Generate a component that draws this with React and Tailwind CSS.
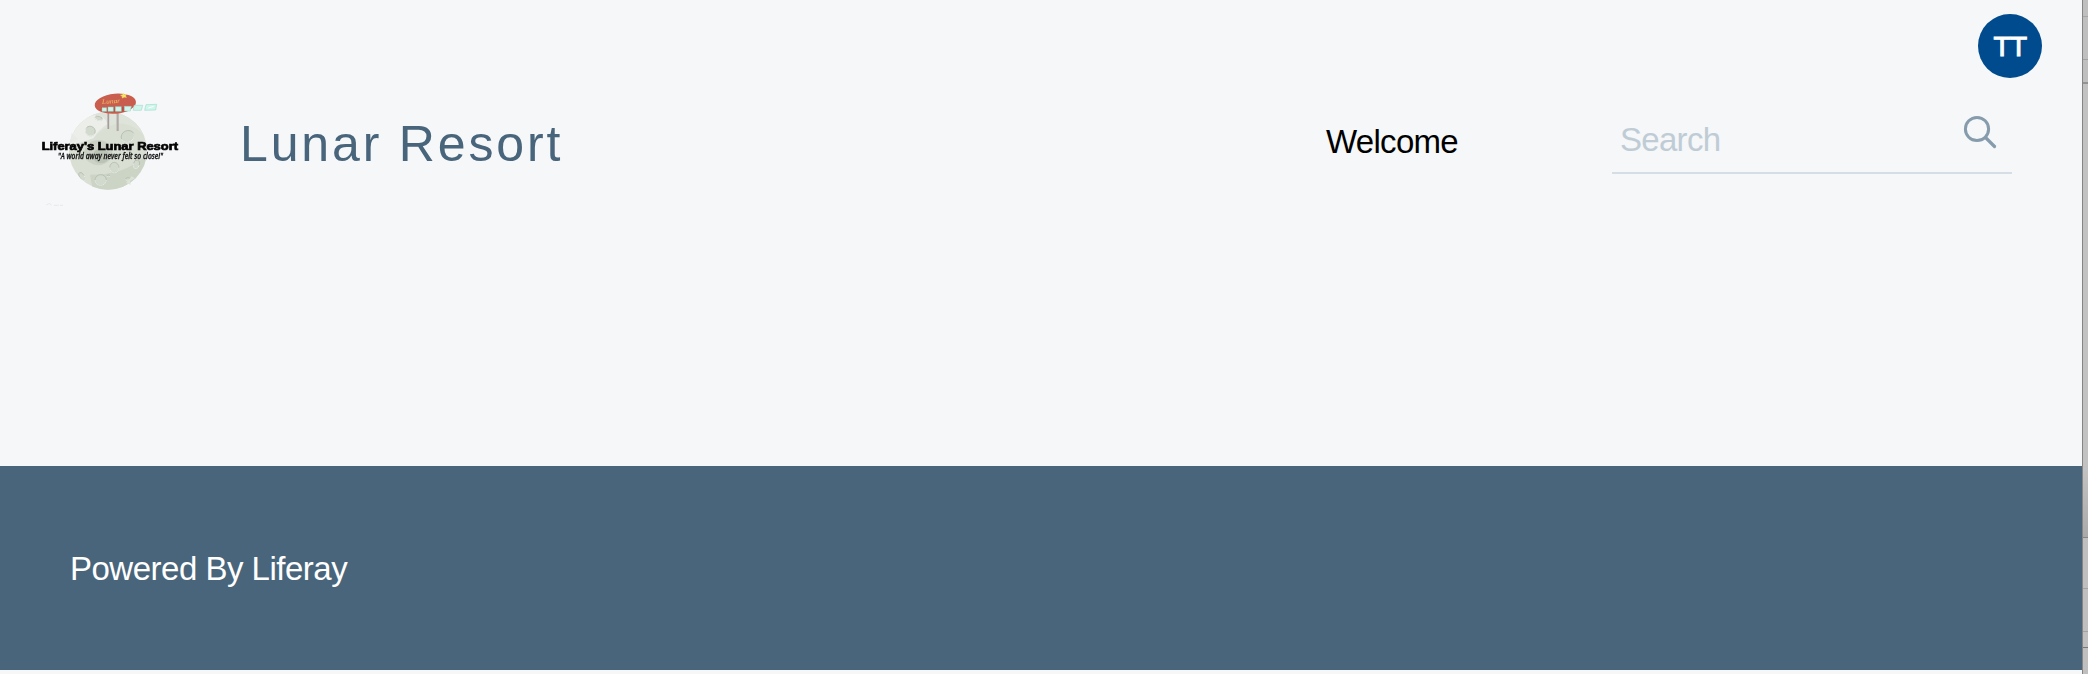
const FONT = "font-['Liberation_Sans',Arial,sans-serif]";

function Crater({ x, y, rx, ry, rotate = 0 }) {
  return (
    <g transform={`translate(${x} ${y}) rotate(${rotate})`}>
      <ellipse rx={rx} ry={ry} fill="#d2d9cd" stroke="#afb6ab" strokeWidth="2" />
      <path d={`M ${-rx} 0 A ${rx} ${ry} 0 0 0 ${rx} 0`} fill="none" stroke="#edf0eb" strokeWidth="2.5" />
    </g>
  );
}

function ResortLogo() {
  return (
    <svg className="block h-[135px] w-40 shrink-0 blur-[0.35px]" viewBox="0 0 480 405" aria-label="Liferay's Lunar Resort">
      <defs>
        <clipPath id="moon">
          <circle cx="234" cy="212" r="117" />
        </clipPath>
      </defs>
      <circle cx="234" cy="212" r="117" fill="#d9dfd3" />
      <g clipPath="url(#moon)">
        <path d="M100 200 L112 60 L350 60 L352 180 Q325 135 265 130 Q215 142 190 175 L115 200Z" fill="#dfe4db" />
        <path d="M108 180 Q125 125 172 108 Q225 98 232 132 Q205 150 190 175 L115 200Z" fill="#eceeea" />
        <path d="M180 284 Q232 284 270 272 Q320 255 352 220 L352 340 L190 340Z" fill="#ccd4c5" />
        <ellipse cx="205" cy="218" rx="42" ry="38" fill="#cbd2c5" />
        <ellipse cx="213" cy="228" rx="25" ry="22" fill="#bbc3b5" />
        <Crater x={181} y={153} rx={15} ry={14} rotate={35} />
        <Crater x={206} y={115} rx={11} ry={6} rotate={15} />
        <Crater x={293} y={169} rx={20} ry={17} rotate={-25} />
        <Crater x={253} y={263} rx={14} ry={16} />
        <Crater x={212} y={300} rx={17} ry={16} />
        <Crater x={156} y={290} rx={7} ry={14} rotate={-30} />
        <Crater x={319} y={253} rx={9} ry={13} rotate={15} />
        <Crater x={294} y={298} rx={7} ry={5} />
        <Crater x={235} y={288} rx={4} ry={3} />
      </g>
      <path d="M120 187 L125 159 L145 178Z" fill="#e8ebe5" />
      <path d="M288 309 L302 314 L300 302 L315 295 L305 289Z" fill="#dbe2d6" />
      <path d="M234 94 V147 M262 94 V153" stroke="#c2b9b9" strokeWidth="6" />
      <path d="M236 94 V147 M264 94 V153" stroke="#8f8587" strokeWidth="2" />
      <ellipse cx="256" cy="71" rx="62" ry="30" transform="rotate(-5 256 71)" fill="#c95d4e" />
      <path d="M210 91 L245 97 L293 94 L293 81 L215 81Z" fill="#b94f44" />
      <text x="216" y="72" transform="rotate(-4 216 72)" textLength="55" lengthAdjust="spacingAndGlyphs" fill="#eec269" className="font-['Liberation_Serif',serif] text-[20px] italic">
        Lunar
      </text>
      <path d="M280 40 L283 44 L289 43 L286 48 L289 52 L282 51 L277 54 L277 49 L272 46 L278 45Z" fill="#f4e667" stroke="#f4e667" strokeWidth="2" />
      <g fill="#cdf7eb" stroke="#93d0c2" strokeWidth="1.5">
        <path d="M216 83 h14 v11 h-14Z" />
        <path d="M234 81 h16 v13 h-16Z" />
        <path d="M256 80 h18 v14 h-18Z" />
        <path d="M283 79 h21 l-3 14 h-18Z" />
        <path d="M312 76 h26 l-4 15 h-24Z" />
        <path d="M348 74 l32 -1 -3 17 -33 1Z" />
      </g>
      <path d="M355 84 L371 79" stroke="#ffffff" strokeWidth="3" />
      <text x="35" y="209" textLength="409" lengthAdjust="spacingAndGlyphs" fill="#050505" stroke="#050505" strokeWidth="2.2" className="font-['Liberation_Sans',Arial,sans-serif] text-[35px] font-bold">
        Liferay's Lunar Resort
      </text>
      <text x="84" y="237" textLength="315" lengthAdjust="spacingAndGlyphs" fill="#111111" stroke="#111111" strokeWidth="0.8" className="font-['Open_Sans',sans-serif] text-[24px] font-semibold italic">
        "A world away never felt so close!"
      </text>
      <path d="M49 375 L59 370 L64 376 M72 376 H86 M90 376 H99" fill="none" stroke="#e1e3e4" strokeWidth="2" />
    </svg>
  );
}

function SearchIcon() {
  return (
    <svg className="block size-9" viewBox="0 0 36 36" fill="none" stroke="#869cad" strokeLinecap="round">
      <circle cx="15" cy="15" r="11.6" strokeWidth="3" />
      <path d="M23.5 23.5 L32.5 32.5" strokeWidth="3.2" />
    </svg>
  );
}

function Header() {
  return (
    <header className="flex h-[466px] flex-col bg-[#f5f7f9]">
      <div className="flex justify-end pt-3.5 pr-10">
        <div className="flex size-16 items-center justify-center rounded-full bg-[#004b8d] pt-0.5 text-[28px] leading-none tracking-[-0.6px] text-white">
          <span className="[-webkit-text-stroke:1px_white]">TT</span>
        </div>
      </div>
      <div className="flex items-start pt-0.5 pl-[30px]">
        <ResortLogo />
        <h1 className="mt-[34px] ml-[50px] text-[50px] leading-[60px] tracking-[2.85px] whitespace-nowrap text-[#48657b]">
          Lunar Resort
        </h1>
        <nav className="mt-[42px] ml-auto text-[33px] leading-10 tracking-[-0.7px] text-black">
          <a href="#welcome">Welcome</a>
        </nav>
        <form className="mt-[34px] mr-[70px] ml-[154px] flex h-[60px] w-[400px] items-start justify-between border-b-2 border-[#d6dde4] pr-3.5 pl-2">
          <label className="mt-1.5 text-[33px] leading-10 tracking-[-0.7px] text-[#bfccd5]">Search</label>
          <SearchIcon />
        </form>
      </div>
    </header>
  );
}

function WindowEdge() {
  return (
    <div className="flex h-[674px] w-1.5 flex-col border-l border-[#858585] bg-[#bfbfbf]">
      <div className="h-[17px] border-b border-[#a7a7a7]" />
      <div className="h-[43px] border-b border-[#a2a2a2]" />
      <div className="h-6 border-b-2 border-[#939393]" />
      <div className="h-[454px] border-b border-[#858585] bg-linear-to-b from-[#c2c2c2] from-85% to-[#aaaaaa]" />
      <div className="h-[51px] border-b border-[#a2a2a2]" />
      <div className="h-[43px] border-b border-[#a2a2a2]" />
      <div className="h-4 border-b border-[#777777]" />
    </div>
  );
}

export default function App() {
  return (
    <div className={`flex h-[674px] w-[2088px] overflow-hidden bg-[#f5f7f9] ${FONT}`}>
      <main className="w-[2082px] shrink-0">
        <Header />
        <footer className="flex h-[204px] items-center bg-[#48657b] pt-0.5 pl-[70px] text-[33px] tracking-[-0.5px] text-white">
          Powered By Liferay
        </footer>
      </main>
      <WindowEdge />
    </div>
  );
}
